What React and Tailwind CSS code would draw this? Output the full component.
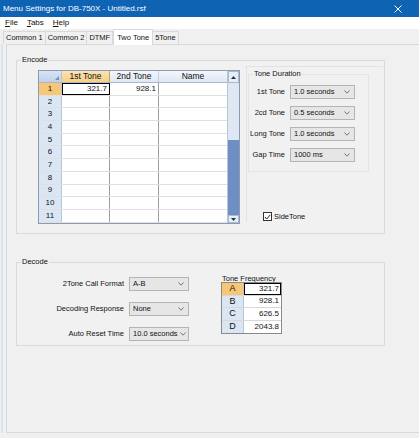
import React from "react";

function Chevron() {
  return (
    <svg width="6" height="4" viewBox="0 0 6 4" className="shrink-0">
      <polyline points="0.5,0.5 3,3.2 5.5,0.5" fill="none" stroke="#6a6a6a" strokeWidth="0.9" />
    </svg>
  );
}

function Sel({ value, className }) {
  return (
    <div className={"h-[14px] border border-[#b4b4b4] bg-[#e6e6e6] flex items-center justify-between pl-[3px] pr-[4px] gap-[2px] whitespace-nowrap " + className}>
      <span>{value}</span>
      <Chevron />
    </div>
  );
}

function GroupBox({ label, className, children }) {
  return (
    <div className={"relative border border-[#dadada] " + className}>
      <span className="absolute left-[4px] top-[-6px] bg-[#f0f0f0] px-[1px] leading-[10px] whitespace-nowrap">{label}</span>
      {children}
    </div>
  );
}

const rows = [1, 2, 3, 4, 5, 6, 7, 8, 9, 10, 11];

function EncodeGrid() {
  return (
    <div className="w-[202px] h-[154px] border border-[#8c9bb0] bg-white flex overflow-hidden text-[8px]">
      <div className="flex-1 flex flex-col">
        <div className="h-[12px] flex border-b border-[#a9b8cc] bg-gradient-to-b from-[#f4f7fb] to-[#dfe7f2] text-[8.5px]">
          <div className="w-[23px] border-r border-[#b8c6d8] bg-gradient-to-b from-[#d8e4f3] to-[#bfd1ea] relative">
            <svg width="4" height="4" className="absolute right-[2px] bottom-[2px]" viewBox="0 0 4 4">
              <polygon points="4,0 4,4 0,4" fill="#7a8fb0" />
            </svg>
          </div>
          <div className="w-[48px] border-r border-[#c6a060] bg-gradient-to-b from-[#fbe3b4] to-[#f6cf86] flex items-center justify-center">1st Tone</div>
          <div className="w-[49px] border-r border-[#c4cfdd] flex items-center justify-center">2nd Tone</div>
          <div className="flex-1 flex items-center justify-center">Name</div>
        </div>
        {rows.map((r) => (
          <div key={r} className="h-[12.7px] flex border-b border-[#e0e0e0]">
            <div
              className={
                "w-[23px] border-r border-[#b8c6d8] flex items-center justify-center " +
                (r === 1 ? "bg-[#f7c676]" : "bg-[#dbe6f4]")
              }
            >
              {r}
            </div>
            <div
              className={
                "w-[48px] border-r border-[#a0a0a0] flex items-center justify-end pr-[2px] " +
                (r === 1 ? "outline outline-[1.5px] outline-black -outline-offset-[1px]" : "")
              }
            >
              {r === 1 ? "321.7" : ""}
            </div>
            <div className="w-[49px] border-r border-[#a0a0a0] flex items-center justify-end pr-[2px]">
              {r === 1 ? "928.1" : ""}
            </div>
            <div className="flex-1" />
          </div>
        ))}
      </div>
      <div className="w-[12px] border-l border-[#b8c6d8] flex flex-col">
        <div className="h-[12px] bg-[#e9eef6] border border-[#a9b8cc] flex items-center justify-center">
          <svg width="5" height="3" viewBox="0 0 5 3">
            <polygon points="0,3 2.5,0 5,3" fill="#20344f" />
          </svg>
        </div>
        <div className="h-[57px] bg-[#dfe7f3]" />
        <div className="flex-1 bg-[#6f8fc4]" />
        <div className="h-[8px] bg-[#e9eef6] border border-[#a9b8cc] flex items-center justify-center">
          <svg width="5" height="3" viewBox="0 0 5 3">
            <polygon points="0,0 5,0 2.5,3" fill="#20344f" />
          </svg>
        </div>
      </div>
    </div>
  );
}

function ToneFreq() {
  const data = [
    ["A", "321.7"],
    ["B", "928.1"],
    ["C", "626.5"],
    ["D", "2043.8"],
  ];
  return (
    <div className="flex flex-col">
      <span className="leading-[9px] mb-[-1px] ml-[1px] whitespace-nowrap">Tone Frequency</span>
      <div className="w-[61px] border border-[#8a8a8a] bg-white flex flex-col text-[8px]">
        {data.map(([k, v], i) => (
          <div key={k} className={"h-[12.5px] flex " + (i < 3 ? "border-b border-[#d8d8d8]" : "")}>
            <div
              className={
                "w-[22px] border-r border-[#b8c6d8] flex items-center justify-center text-[9px] " +
                (i === 0 ? "bg-[#f7c676]" : "bg-[#dbe6f4]")
              }
            >
              {k}
            </div>
            <div
              className={
                "flex-1 flex items-center justify-end pr-[2px] " +
                (i === 0 ? "outline outline-[1.5px] outline-black -outline-offset-[1px]" : "")
              }
            >
              {v}
            </div>
          </div>
        ))}
      </div>
    </div>
  );
}

export default function App() {
  const durations = [
    ["1st Tone", "1.0 seconds"],
    ["2cd Tone", "0.5 seconds"],
    ["Long Tone", "1.0 seconds"],
    ["Gap Time", "1000 ms"],
  ];
  const decode = [
    ["2Tone Call Format", "A-B"],
    ["Decoding Response", "None"],
    ["Auto Reset Time", "10.0 seconds"],
  ];
  return (
    <div
      className="w-[419px] h-[438px] bg-[#f0f0f0] flex flex-col overflow-hidden text-[7.5px] text-[#111] leading-none"
      style={{ fontFamily: '"Liberation Sans", Arial, sans-serif' }}
    >
      <div className="h-[17px] shrink-0 bg-[#0f63b3] flex items-center justify-between pl-[3px] pr-[17px] text-white text-[8px]">
        <span>Menu Settings for DB-750X - Untitled.rsf</span>
        <svg width="8" height="8" viewBox="0 0 8 8">
          <path d="M0.5 0.5 L7.5 7.5 M7.5 0.5 L0.5 7.5" stroke="#fff" strokeWidth="1" />
        </svg>
      </div>
      <div className="h-[12px] shrink-0 bg-white flex items-center pl-[5px] gap-[9px] text-[8px]">
        <span>
          <span className="underline">F</span>ile
        </span>
        <span>
          <span className="underline">T</span>abs
        </span>
        <span>
          <span className="underline">H</span>elp
        </span>
      </div>
      <div className="h-[15px] shrink-0 flex items-end pl-[3px] relative z-10 text-[7.5px]">
        <div className="h-[13px] px-[2px] border border-b-0 border-[#d9d9d9] bg-[#f0f0f0] flex items-center">Common 1</div>
        <div className="h-[13px] px-[2px] border border-b-0 border-l-0 border-[#d9d9d9] bg-[#f0f0f0] flex items-center">Common 2</div>
        <div className="h-[13px] px-[2px] border border-b-0 border-l-0 border-[#d9d9d9] bg-[#f0f0f0] flex items-center">DTMF</div>
        <div className="h-[16px] mb-[-1px] px-[3px] border border-b-0 border-[#d9d9d9] bg-white flex items-center">Two Tone</div>
        <div className="h-[13px] px-[2px] border border-b-0 border-l-0 border-[#d9d9d9] bg-[#f0f0f0] flex items-center">5Tone</div>
      </div>
      <div className="flex-1 flex border-l-[2px] border-[#dbe4ef] ml-[1px] mb-[5px]">
        <div className="flex-1 ml-[3px] border border-[#d9d9d9] border-r-0 bg-[#f0f0f0] flex flex-col pl-[9px] pt-[15px]">
          <GroupBox label="Encode" className="w-[369px] h-[174px] flex bg-[#f1f1f1]">
            <div className="flex pt-[9px] pl-[21px]">
              <EncodeGrid />
              <div className="ml-[6px] w-[137px] h-[156px] mt-[-4px] border-l border-t border-[#e2e2e2] flex flex-col pt-[7px] pl-[1px]">
                <GroupBox label="Tone Duration" className="w-[121px] h-[98px] flex flex-col pt-[10px] gap-[7px] border-[#e4e4e4]">
                  {durations.map(([l, v]) => (
                    <div key={l} className="flex items-center">
                      <span className="w-[36px] text-right whitespace-nowrap">{l}</span>
                      <Sel value={v} className="ml-[5px] w-[65px]" />
                    </div>
                  ))}
                </GroupBox>
                <div className="mt-[40px] ml-[15px] flex items-center gap-[2px]">
                  <div className="w-[9px] h-[9px] border border-[#333] bg-white flex items-center justify-center">
                    <svg width="7" height="6" viewBox="0 0 7 6">
                      <polyline points="0.8,3 2.7,5 6.3,0.8" fill="none" stroke="#222" strokeWidth="1" />
                    </svg>
                  </div>
                  <span>SideTone</span>
                </div>
              </div>
            </div>
          </GroupBox>
          <GroupBox label="Decode" className="mt-[28px] w-[369px] h-[84px] flex bg-[#f1f1f1]">
            <div className="flex flex-col pt-[14px] gap-[11px]">
              {decode.map(([l, v]) => (
                <div key={l} className="flex items-center">
                  <span className="w-[107px] text-right whitespace-nowrap">{l}</span>
                  <Sel value={v} className="ml-[5px] w-[60px]" />
                </div>
              ))}
            </div>
            <div className="ml-[32px] pt-[11px]">
              <ToneFreq />
            </div>
          </GroupBox>
        </div>
      </div>
    </div>
  );
}
